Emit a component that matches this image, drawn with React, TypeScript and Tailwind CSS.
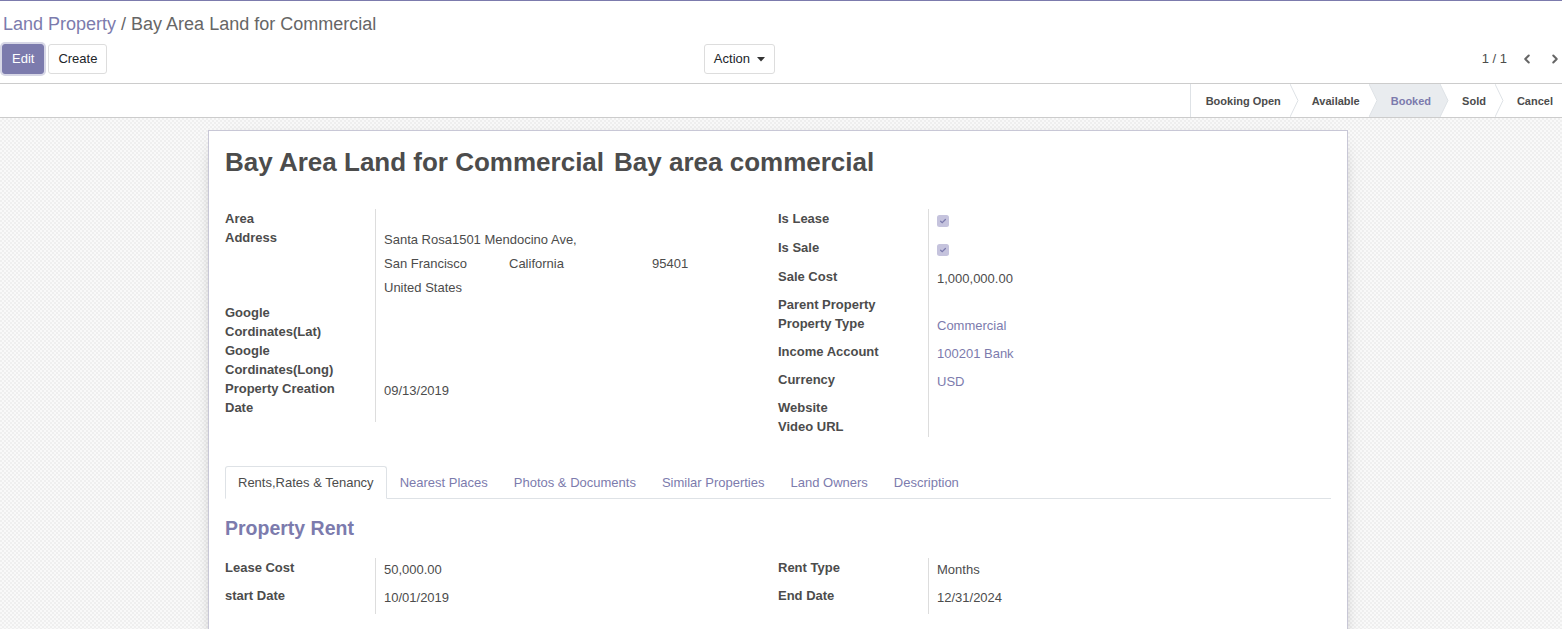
import React from 'react';
import { ChevronLeft, ChevronRight } from 'lucide-react';

const PURPLE = 'text-[#7c7bad]';

type RowProps = {
  label: React.ReactNode;
  h: string;
  children?: React.ReactNode;
  valueClass?: string;
};

const Row = ({ label, h, children, valueClass = '' }: RowProps) => (
  <div className={`flex ${h}`}>
    <div className="w-[150px] shrink-0 pr-[15px] font-bold leading-[19px] text-[#4c4c4c]">{label}</div>
    <div className={`flex-1 border-l border-[#dddddd] pl-2 pt-[2px] leading-[19px] ${valueClass}`}>{children}</div>
  </div>
);

const Check = () => (
  <svg width="12" height="12" viewBox="0 0 12 12" className="mt-[4px]">
    <rect x="0" y="0" width="12" height="12" rx="2.5" fill="#c5c3dd" />
    <path d="M3.6 6.2 L5.2 7.7 L8.4 4.5" stroke="#7c7bad" strokeWidth="1.2" fill="none" strokeLinecap="round" />
  </svg>
);

const STATES = ['Booking Open', 'Available', 'Booked', 'Sold', 'Cancel'];

const StatusBar = () => (
  <div className="flex justify-end h-[34px] border-b border-[#cccccc]">
    <div className="flex border-l border-[#dee2e6] text-[11px] font-bold">
      {STATES.map((s, i) => {
        const active = s === 'Booked';
        const nextActive = STATES[i + 1] === 'Booked';
        return (
          <React.Fragment key={s}>
            <div
              className={`flex items-center pt-[1px] pr-[9px] ${i === 0 ? 'pl-[15px]' : 'pl-[13px]'} ${
                active ? 'bg-[#e9ecef] text-[#7c7bad]' : 'text-[#4c4c4c]'
              }`}
            >
              {s}
            </div>
            {i < STATES.length - 1 && (
              <svg width="9" height="33" viewBox="0 0 9 33" className="shrink-0">
                {nextActive && <polygon points="0,0 9,0 9,33 0,33 8,16.5" fill="#e9ecef" />}
                {active && <polygon points="0,0 8,16.5 0,33" fill="#e9ecef" />}
                <polyline points="0,0 8,16.5 0,33" fill="none" stroke="#dee2e6" strokeWidth="1" />
              </svg>
            )}
          </React.Fragment>
        );
      })}
    </div>
  </div>
);

const TABS = ['Rents,Rates & Tenancy', 'Nearest Places', 'Photos & Documents', 'Similar Properties', 'Land Owners', 'Description'];

export default function App() {
  return (
    <div className="min-h-screen bg-white text-[13px] text-[#4c4c4c] font-['Liberation_Sans',Arial,sans-serif] border-t border-[#7c7bad]">
      {/* control panel */}
      <div className="pt-[10px] pb-[9px] border-b border-[#cccccc]">
        <div className="pl-[3px] text-[18px] leading-[26px]">
          <span className={PURPLE}>Land Property</span>
          <span className="text-[#666666]"> / Bay Area Land for Commercial</span>
        </div>
        <div className="flex mt-[7px]">
          <div className="w-1/2 flex justify-between pl-[2px] pr-[6px]">
            <div className="flex gap-[4px]">
              <button className="h-[30px] px-[9px] rounded-[3px] bg-[#7c7bad] border border-[#7c7bad] text-white shadow-[0_0_0_2px_rgba(124,123,173,0.3)]">
                Edit
              </button>
              <button className="h-[30px] px-[9px] rounded-[3px] bg-white border border-[#dddddd] text-[#212529]">Create</button>
            </div>
            <button className="h-[30px] px-[9px] rounded-[3px] bg-white border border-[#dddddd] text-[#212529] flex items-center gap-[7px]">
              Action
              <svg width="8" height="5" viewBox="0 0 8 5">
                <polygon points="0,0 8,0 4,4.5" fill="#333333" />
              </svg>
            </button>
          </div>
          <div className="w-1/2 flex justify-end items-center text-[#4c4c4c]">
            <span className="mr-[13px] text-[13px]">1 / 1</span>
            <div className="flex gap-[14px] text-[#666666]">
              <button className="h-[30px] flex items-center">
                <ChevronLeft size={14} strokeWidth={3.5} />
              </button>
              <button className="h-[30px] flex items-center">
                <ChevronRight size={14} strokeWidth={3.5} />
              </button>
            </div>
          </div>
        </div>
      </div>

      <StatusBar />

      {/* sheet background */}
      <div className="bg-[image:repeating-conic-gradient(#efefef_0%_25%,#f9f9f9_0%_50%)] [background-size:4px_4px] pt-3 pb-10 pr-[6px]">
        <div className="mx-auto w-[1140px] bg-white border border-[#c8c7d6] shadow-[0_5px_20px_-15px_#000] px-4 pt-4 pb-16">
          <h1 className="text-[26px] leading-[31px] font-bold text-[#4c4c4c] flex gap-[10px]">
            <span>Bay Area Land for Commercial</span>
            <span>Bay area commercial</span>
          </h1>

          <div className="flex mt-[31px]">
            <div className="w-1/2">
              <Row label="Area" h="h-[19px]" />
              <Row label="Address" h="h-[75px]">
                <div className="-mt-[2px] leading-[24px]">
                  <div>Santa Rosa1501 Mendocino Ave,</div>
                  <div className="flex">
                    <span className="w-[125px]">San Francisco</span>
                    <span className="w-[143px]">California</span>
                    <span>95401</span>
                  </div>
                  <div>United States</div>
                </div>
              </Row>
              <Row label={<>Google<br />Cordinates(Lat)</>} h="h-[38px]" />
              <Row label={<>Google<br />Cordinates(Long)</>} h="h-[38px]" />
              <Row label={<>Property Creation<br />Date</>} h="h-[43px]">
                09/13/2019
              </Row>
            </div>
            <div className="w-1/2">
              <Row label="Is Lease" h="h-[29px]">
                <Check />
              </Row>
              <Row label="Is Sale" h="h-[29px]">
                <Check />
              </Row>
              <Row label="Sale Cost" h="h-[28px]">
                1,000,000.00
              </Row>
              <Row label="Parent Property" h="h-[19px]" />
              <Row label="Property Type" h="h-[28px]" valueClass={PURPLE}>
                Commercial
              </Row>
              <Row label="Income Account" h="h-[28px]" valueClass={PURPLE}>
                100201 Bank
              </Row>
              <Row label="Currency" h="h-[28px]" valueClass={PURPLE}>
                USD
              </Row>
              <Row label="Website" h="h-[19px]" />
              <Row label="Video URL" h="h-[20px]" />
            </div>
          </div>

          {/* tabs */}
          <div className="mt-[29px] flex border-b border-[#dee2e6]">
            {TABS.map((t, i) => (
              <div
                key={t}
                className={`-mb-px px-[12px] h-[33px] flex items-center border rounded-t-[3px] ${
                  i === 0 ? 'border-[#dee2e6] border-b-white bg-white text-[#4c4c4c]' : 'border-transparent text-[#7c7bad]'
                }`}
              >
                {t}
              </div>
            ))}
          </div>

          <h2 className="mt-[17px] text-[19.5px] leading-[24px] font-bold text-[#7c7bad]">Property Rent</h2>

          <div className="flex mt-[18px]">
            <div className="w-1/2">
              <Row label="Lease Cost" h="h-[28px]">
                50,000.00
              </Row>
              <Row label="start Date" h="h-[28px]">
                10/01/2019
              </Row>
            </div>
            <div className="w-1/2">
              <Row label="Rent Type" h="h-[28px]">
                Months
              </Row>
              <Row label="End Date" h="h-[28px]">
                12/31/2024
              </Row>
            </div>
          </div>
        </div>
      </div>
    </div>
  );
}
